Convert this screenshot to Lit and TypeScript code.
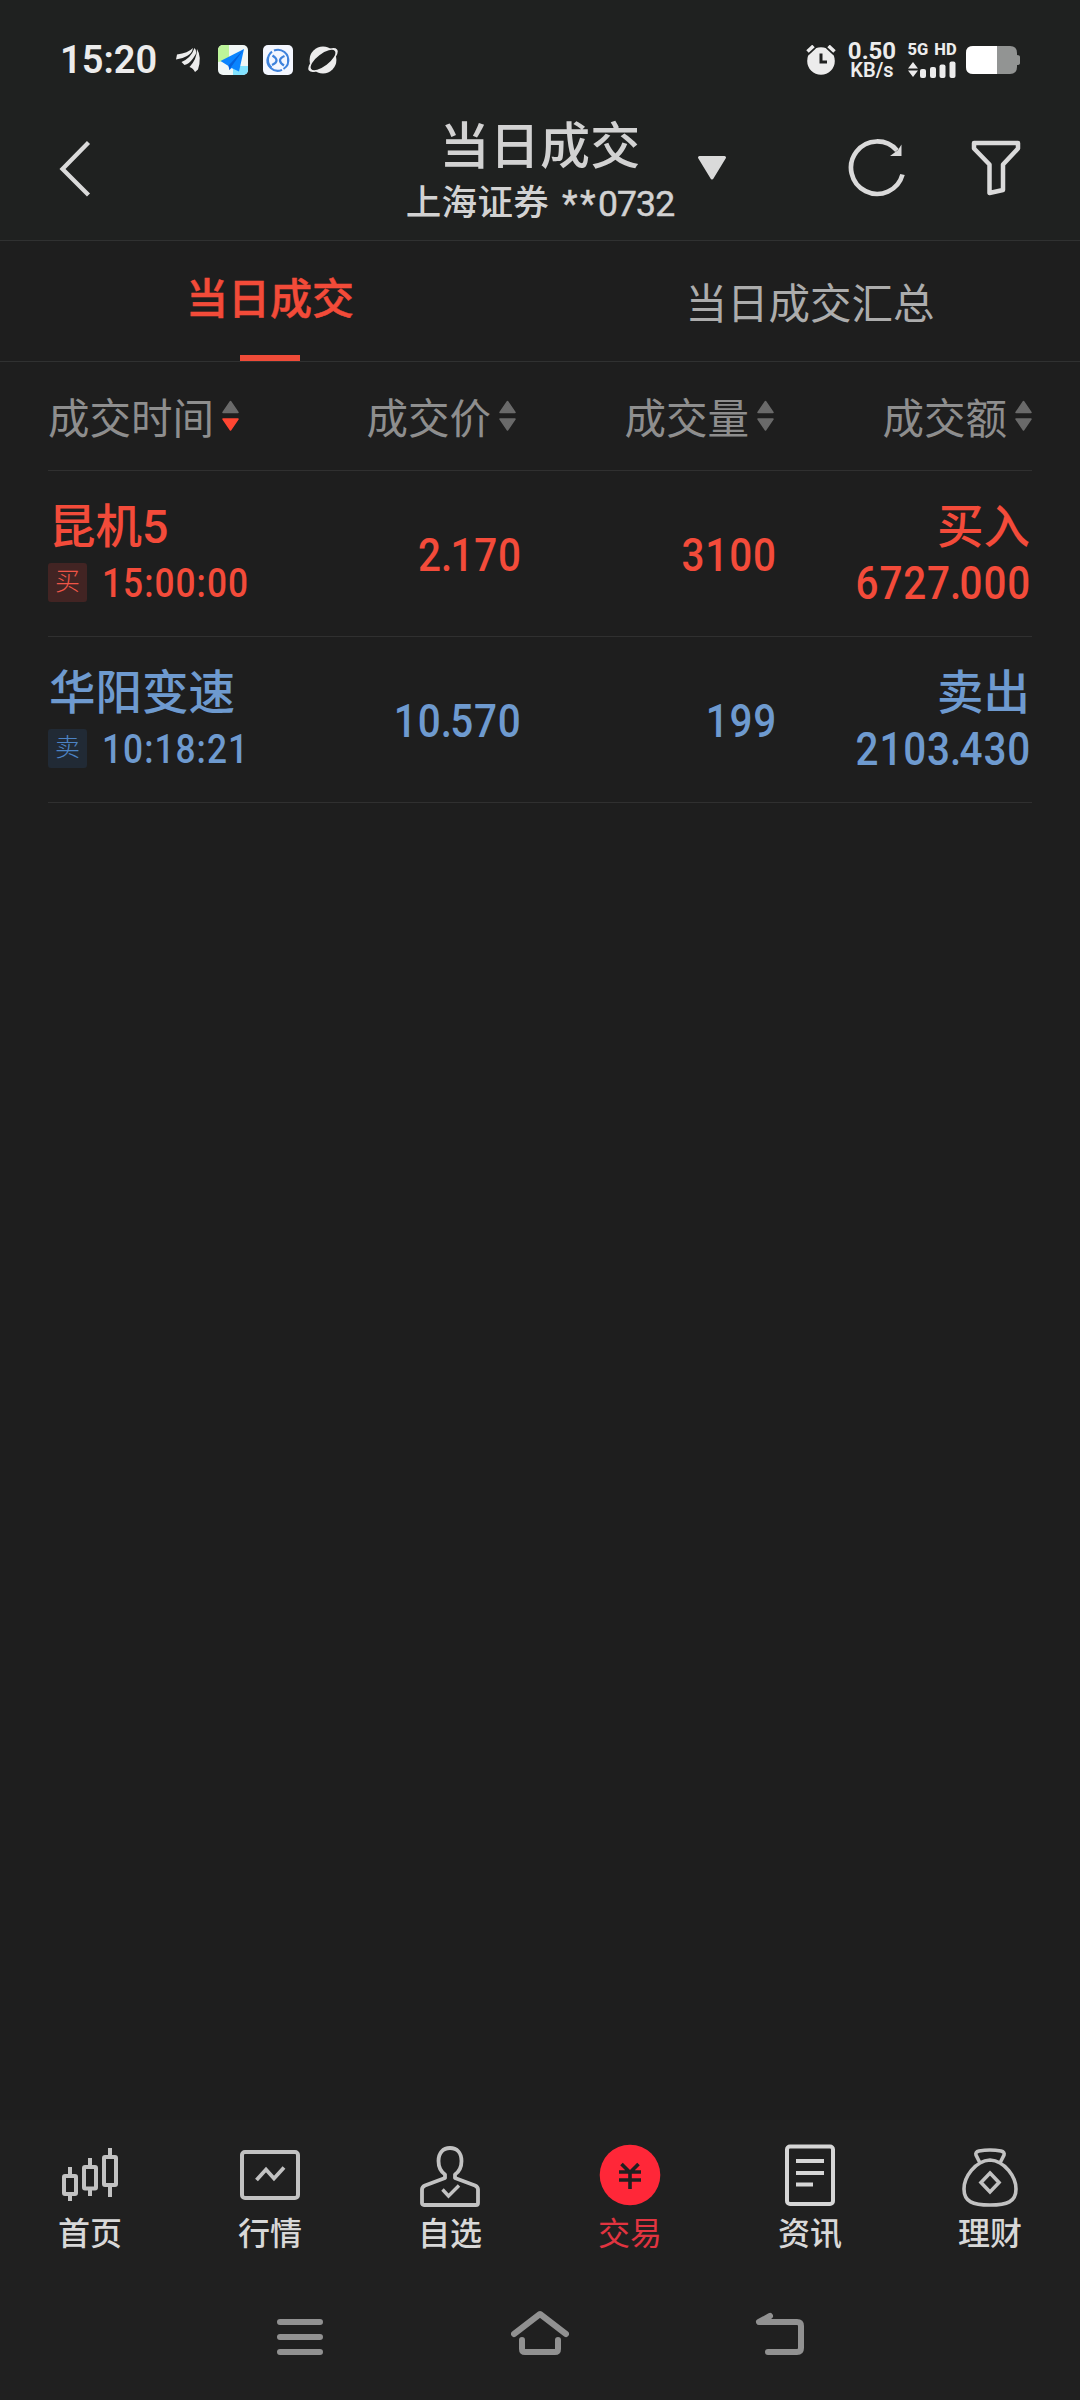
import { LitElement, html, svg, css } from "lit";
import { customElement, property } from "lit/decorators.js";

type Side = "buy" | "sell";
interface Deal {
  name: string;
  side: Side;
  tag: string;
  time: string;
  price: string;
  volume: string;
  action: string;
  amount: string;
}

const DEALS: Deal[] = [
  { name: "昆机5", side: "buy", tag: "买", time: "15:00:00", price: "2.170", volume: "3100", action: "买入", amount: "6727.000" },
  { name: "华阳变速", side: "sell", tag: "卖", time: "10:18:21", price: "10.570", volume: "199", action: "卖出", amount: "2103.430" },
];

@customElement("status-bar")
class StatusBar extends LitElement {
  static styles = css`
    :host { display: flex; height: 120px; box-sizing: border-box; padding: 0 60px 0 60px; align-items: center; color: #ececec; font-family: Roboto, sans-serif; }
    .time { font-size: 38px; font-weight: 600; line-height: 40px; width: 98px; letter-spacing: 0; }
    .apps { display: flex; align-items: center; margin-left: 16px; gap: 15px; }
    .grow { flex: 1; }
    .right { display: flex; align-items: center; }
    svg { display: block; }
    .speed { display: flex; flex-direction: column; align-items: center; width: 50px; margin-left: 11px; font-weight: 700; }
    .rate { font-size: 24px; line-height: 20px; }
    .unit { font-size: 20px; line-height: 18px; font-weight: 600; }
    .cell { display: flex; flex-direction: column; align-items: center; width: 50px; margin: 0 9px 0 10px; gap: 4px; }
    .net { font-size: 16.5px; font-weight: 800; line-height: 14px; white-space: nowrap; word-spacing: 2px; }
  `;
  render() {
    return html`
      <div class="time">15:20</div>
      <div class="apps">
        <svg width="29" height="30" viewBox="0 0 29 30" fill="#ececec">
          <path d="M2 14.500L3 9.500Q14 8 19 3Q18 8.500 13 11Q8 14 2 14.500Z" />
          <path d="M7.500 17Q17 13 20.500 3Q24.500 7 19 13.500Q15 19 10.500 20Z" />
          <path d="M15.500 22Q23 14 23 4Q28 12 24 24.500L21 27Q19 23 15.500 22Z" />
        </svg>
        <svg width="30" height="30" viewBox="0 0 30 30">
          <rect width="30" height="30" rx="5" fill="#f1f7f6" />
          <path d="M5 0h6v15L0 17V5a5 5 0 0 1 5-5Z" fill="#bdf59a" />
          <path d="M15 21h15v4a5 5 0 0 1-5 5H15Z" fill="#82e3ff" />
          <path d="M26 4L2.500 16l8 5 1 4 2-2 7.500 3.500Z" fill="#0a84ff" />
          <path d="M26 4L10.500 20.500l1 4.500 2-3.500Z" fill="#0662dd" />
        </svg>
        <svg width="30" height="30" viewBox="0 0 30 30" fill="none" stroke="#3f83dc" stroke-width="2">
          <rect width="30" height="30" rx="5" fill="#f4f7ff" stroke="none" />
          <path d="M11 5.500A10.300 10.300 0 0 1 25 17M19 24.800A10.300 10.300 0 0 1 5 12" />
          <path d="M9 6.600A10.300 10.300 0 0 0 8.500 22.500M20.500 24A10.300 10.300 0 0 0 25 13" />
          <path d="M9.500 10.500q4 2.500 4 5t-4.500 4.500M21 20.500q-4-2.500-4-5t4.500-4.500" stroke-width="2.300" />
        </svg>
        <svg width="30" height="30" viewBox="0 0 30 30">
          <circle cx="15" cy="15" r="13.400" fill="#ececec" />
          <ellipse cx="15" cy="15" rx="17.600" ry="7.200" transform="rotate(-37 15 15)" fill="#ececec" />
          <ellipse cx="15" cy="15" rx="14.800" ry="6" transform="rotate(-37 15 15)" fill="#1f2120" />
        </svg>
      </div>
      <div class="grow"></div>
      <div class="right">
        <svg width="30" height="30" viewBox="0 0 30 30">
          <circle cx="15" cy="16" r="13.800" fill="#ececec" />
          <path d="M0.500 7.500l7-6.500M29.500 7.500L22.500 1" stroke="#1f2120" stroke-width="7" />
          <path d="M1.500 6.500l6-5.500M28.500 6.500l-6-5.500" stroke="#ececec" stroke-width="3.600" />
          <path d="M15 8.500V17h6" stroke="#1f2120" stroke-width="3" fill="none" />
        </svg>
        <div class="speed"><span class="rate">0.50</span><span class="unit">KB/s</span></div>
        <div class="cell">
          <span class="net">5G HD</span>
          <svg width="48" height="17" viewBox="0 0 48 17" fill="#ececec">
            <path d="M5 1l5 6.500H0ZM5 16L0 9.500h10Z" />
            <rect x="12" y="8" width="6" height="9" rx="2" /><rect x="22" y="6" width="6" height="11" rx="2" />
            <rect x="31.500" y="3.500" width="6" height="13.500" rx="2" /><rect x="41.500" y="0.500" width="6" height="16.500" rx="2" />
          </svg>
        </div>
        <svg width="54" height="28" viewBox="0 0 54 28">
          <path d="M7 0h37q7 0 7 7v2q3 0 3 2v6q0 2-3 2v2q0 7-7 7H7q-7 0-7-7V7Q0 0 7 0Z" fill="#929493" />
          <path d="M7 0H31V28H7q-7 0-7-7V7Q0 0 7 0Z" fill="#fff" />
        </svg>
      </div>
    `;
  }
}

@customElement("title-bar")
class TitleBar extends LitElement {
  static styles = css`
    :host { display: grid; grid-template-columns: 405px 270px 1fr; height: 120px; color: #d2d2d2; }
    svg { display: block; fill: none; stroke: #dadada; }
    .back { padding: 20px 0 0 58px; }
    .titles { display: flex; flex-direction: column; align-items: center; font-family: Roboto, "Noto Sans CJK SC", sans-serif; padding-top: 2px; }
    .title { font-size: 50px; line-height: 50px; font-weight: 500; letter-spacing: 0.300px; }
    .account { font-size: 35.500px; line-height: 36px; margin-top: 13px; display: flex; gap: 13px; letter-spacing: 0.300px; font-weight: 500; }
    .digits { display: flex; letter-spacing: 0; font-size: 35.500px; font-weight: 400; -webkit-text-stroke: 0.500px; transform: translateY(1px); }
    .stars { font-size: 36px; letter-spacing: 2.500px; }
    .code { display: inline-block; letter-spacing: -0.900px; }
    .actions { display: flex; padding-top: 18px; }
    .caret { margin: 16px 0 0 21px; }
    .reload { margin: 0 0 0 119px; }
    .funnel { margin: 2px 0 0 64px; }
  `;
  render() {
    return html`
      <div class="back">
        <svg width="34" height="58" viewBox="0 0 34 58"><path d="M30.500 2.500L4.500 29l26 26" stroke-width="4.300" /></svg>
      </div>
      <div class="titles">
        <div class="title">当日成交</div>
        <div class="account"><span>上海证券</span><span class="digits"><span class="stars">**</span><span class="code">0732</span></span></div>
      </div>
      <div class="actions">
        <svg class="caret" width="32" height="28" viewBox="0 0 32 28">
          <path d="M3.500 3.500h25L16 24Z" fill="#dadada" stroke-width="3" stroke-linejoin="round" />
        </svg>
        <svg class="reload" width="60" height="60" viewBox="0 0 60 60">
          <path d="M55.500 36.500A26.200 26.200 0 1 1 50 12.500" stroke-width="4.700" />
          <path d="M54.500 6.500v11.500H43L51 12Z" fill="#dadada" stroke="none" />
        </svg>
        <svg class="funnel" width="50" height="58" viewBox="0 0 50 58">
          <path d="M3 3h44v5.500L32 24.500V50l-13.500 3V24.500L3 8.500Z" stroke-width="4.500" stroke-linejoin="round" />
        </svg>
      </div>
    `;
  }
}

@customElement("deal-tabs")
class DealTabs extends LitElement {
  static styles = css`
    :host { display: grid; grid-template-columns: 1fr 1fr; height: 122px; box-sizing: border-box; border-top: 1px solid #303131; border-bottom: 1px solid #303131; font-family: "Noto Sans CJK SC", sans-serif; font-size: 41.500px; }
    .tab { display: flex; flex-direction: column; align-items: center; justify-content: space-between; color: #acacac; line-height: 60px; padding-top: 30px; }
    .active { color: #f34b39; font-weight: 500; font-size: 42px; -webkit-text-stroke: 0.500px; padding-top: 25px; }
    .mark { width: 60px; height: 6px; background: #ef4b38; }
  `;
  render() {
    return html`
      <div class="tab active"><span>当日成交</span><span class="mark"></span></div>
      <div class="tab"><span>当日成交汇总</span></div>
    `;
  }
}

@customElement("sort-label")
class SortLabel extends LitElement {
  @property() label = "";
  @property({ type: Boolean }) desc = false;
  static styles = css`
    :host { display: flex; align-items: center; gap: 8px; font-family: "Noto Sans CJK SC", sans-serif; font-size: 41.500px; line-height: 60px; color: #8e8e8e; }
    svg { display: block; margin-top: -1px; }
  `;
  render() {
    return html`
      <span>${this.label}</span>
      <svg width="17" height="32" viewBox="0 0 17 32" stroke-width="1.500" stroke-linejoin="round">
        <path d="M8.500 1.500L16 12.500H1Z" fill="#6a6a6a" stroke="#6a6a6a" />
        <path d="M8.500 30L16 19H1Z" fill=${this.desc ? "#ff4632" : "#6a6a6a"} stroke=${this.desc ? "#ff4632" : "#6a6a6a"} />
      </svg>
    `;
  }
}

@customElement("deal-row")
class DealRow extends LitElement {
  @property({ attribute: false }) deal!: Deal;
  static styles = css`
    .row { display: grid; grid-template-columns: 216px 257px 255px 1fr; height: 166px; box-sizing: border-box; border-bottom: 1px solid #303030; font-family: Roboto, "Noto Sans CJK SC", sans-serif; font-weight: 500; font-size: 46.500px; white-space: nowrap; }
    .buy { color: #f34b3a; }
    .sell { color: #6e9acf; }
    .name { line-height: 50px; padding: 31px 0 0 1px; }
    .when { display: flex; align-items: center; gap: 15px; margin-top: 11px; height: 39px; }
    .tag { flex: none; width: 39px; height: 39px; border-radius: 3px; display: grid; place-items: center; font-size: 25px; font-weight: 300; line-height: 36px; padding-bottom: 2px; box-sizing: border-box; }
    .buy .tag { background: #422423; color: #ef5547; }
    .sell .tag { background: #212a35; color: #4c83c4; }
    .num { display: inline-block; transform: scaleX(0.86); transform-origin: right; letter-spacing: 1px; margin-right: -1px; font-size: 47px; line-height: 50px; }
    .dot { letter-spacing: -2px; margin-left: -1px; }
    .time { transform-origin: left; font-size: 41px; line-height: 42px; letter-spacing: 1.200px; padding-top: 1px; }
    .cell { text-align: right; padding-top: 57px; }
    .total { display: flex; flex-direction: column; align-items: flex-end; padding: 31px 2px 0 0; }
    .action { line-height: 50px; }
    .total .num { margin-top: 6px; }
  `;
  private figure(value: string) {
    const [whole, fraction] = value.split(".");
    return html`<span class="num">${whole}${fraction ? html`<span class="dot">.</span>${fraction}` : ""}</span>`;
  }
  render() {
    const d = this.deal;
    return html`
      <div class="row ${d.side}">
        <div>
          <div class="name">${d.name}</div>
          <div class="when"><span class="tag">${d.tag}</span><span class="num time">${d.time}</span></div>
        </div>
        <div class="cell">${this.figure(d.price)}</div>
        <div class="cell">${this.figure(d.volume)}</div>
        <div class="total"><span class="action">${d.action}</span>${this.figure(d.amount)}</div>
      </div>
    `;
  }
}

const NAV = [
  { label: "首页", icon: svg`<g stroke-width="4"><rect x="4" y="34" width="12" height="18" rx="1"/><rect x="24" y="25" width="12" height="21.500" rx="1"/><rect x="44" y="15" width="12" height="28" rx="1"/><path d="M10 25v9m0 18v7M30 16v9m0 21v8M50 6v9m0 28v12"/></g>` },
  { label: "行情", icon: svg`<g stroke-width="4"><rect x="2" y="10" width="56" height="46" rx="3"/><path d="M16.500 38L26 27.500l8 9L44 25.500" stroke-width="3.800"/></g>` },
  { label: "自选", icon: svg`<path stroke-width="3.800" stroke-linejoin="round" d="M25 36v-3.500C20 29 18.500 24 18.500 19C18.500 11 23 6 30 6s11.500 5 11.500 13c0 5-1.500 10-6.500 13.500V36l20 7.500q3 1.500 3 4V61q0 2-2 2H4q-2 0-2-2V47.500q0-2.500 3-4Z"/><path stroke-width="3.400" d="M22.500 47.500l6 6.500L39 43.500"/>` },
  { label: "交易", icon: svg`<circle cx="30" cy="33" r="30.300" fill="#ff2738" stroke="none"/><path stroke="#202020" stroke-width="3.600" d="M21.500 22l8.500 8.500 8.500-8.500M19 30h22M19 38h22M30 30v17"/>`, on: true },
  { label: "资讯", icon: svg`<g stroke="#d6d6d6" stroke-width="4"><rect x="7" y="4.500" width="46" height="57.500" rx="3"/><path d="M16 19h28M16 31h28M16 42.500h17"/></g>` },
  { label: "理财", icon: svg`<g stroke-width="3.600"><path d="M19.500 20L16 13q-1-3 3-4q11-2 22 0q4 1 3 4l-3.500 7M30 18C15 19 4 35 4 47c0 13 9 16 26 16s26-3 26-16C56 35 45 19 30 18Z"/><path d="M30 31l9 9.500-9 9.500-9-9.500Z"/></g>` },
];

@customElement("bottom-nav")
class BottomNav extends LitElement {
  static styles = css`
    :host { display: grid; grid-template-columns: repeat(6, 1fr); height: 146px; box-sizing: border-box; padding-top: 22px; font-family: "Noto Sans CJK SC", sans-serif; font-weight: 500; }
    .item { display: flex; flex-direction: column; align-items: center; color: #d8d8d8; font-size: 32px; line-height: 46px; }
    .on { color: #e13440; font-weight: 400; }
    svg { display: block; overflow: visible; }
  `;
  render() {
    return NAV.map((n) => html`
      <div class="item ${n.on ? "on" : ""}">
        <svg width="60" height="66" viewBox="0 0 60 66" fill="none" stroke="#c2c2c2">${n.icon}</svg>
        <span>${n.label}</span>
      </div>`);
  }
}

@customElement("app-root")
class AppRoot extends LitElement {
  static styles = css`
    :host { display: flex; flex-direction: column; width: 1080px; height: 2400px; background: #1e1e1e; overflow: hidden; }
    .top { background: #1f2120; }
    .sheet { flex: 1; padding: 0 48px; }
    .heads { display: grid; grid-template-columns: 210px 258px 258px 258px; height: 109px; box-sizing: border-box; border-bottom: 1px solid #303030; padding: 24px 0; align-items: center; }
    .end { justify-self: end; }
    .foot { background: #202020; height: 280px; }
    .system { display: flex; justify-content: center; gap: 182px; padding-top: 44px; }
    .system svg { display: block; fill: none; stroke: #919191; stroke-width: 6; stroke-linecap: round; stroke-linejoin: round; }
  `;
  render() {
    return html`
      <div class="top"><status-bar></status-bar><title-bar></title-bar></div>
      <deal-tabs></deal-tabs>
      <div class="sheet">
        <div class="heads">
          <sort-label label="成交时间" desc></sort-label>
          <sort-label class="end" label="成交价"></sort-label>
          <sort-label class="end" label="成交量"></sort-label>
          <sort-label class="end" label="成交额"></sort-label>
        </div>
        ${DEALS.map((d) => html`<deal-row .deal=${d}></deal-row>`)}
      </div>
      <div class="foot">
        <bottom-nav></bottom-nav>
        <div class="system">
          <svg width="58" height="48" viewBox="0 0 58 48"><path d="M9 12h40M9 27h40M9 42h40" /></svg>
          <svg width="58" height="48" viewBox="0 0 58 48"><path d="M3 24L29 4l26 20M11 30v9q0 3 3 3h30q3 0 3-3v-9" /></svg>
          <svg width="58" height="48" viewBox="0 0 58 48"><path d="M19 6L8 12h38q4 0 4 4v22q0 4-4 4H17" /></svg>
        </div>
      </div>
    `;
  }
}
